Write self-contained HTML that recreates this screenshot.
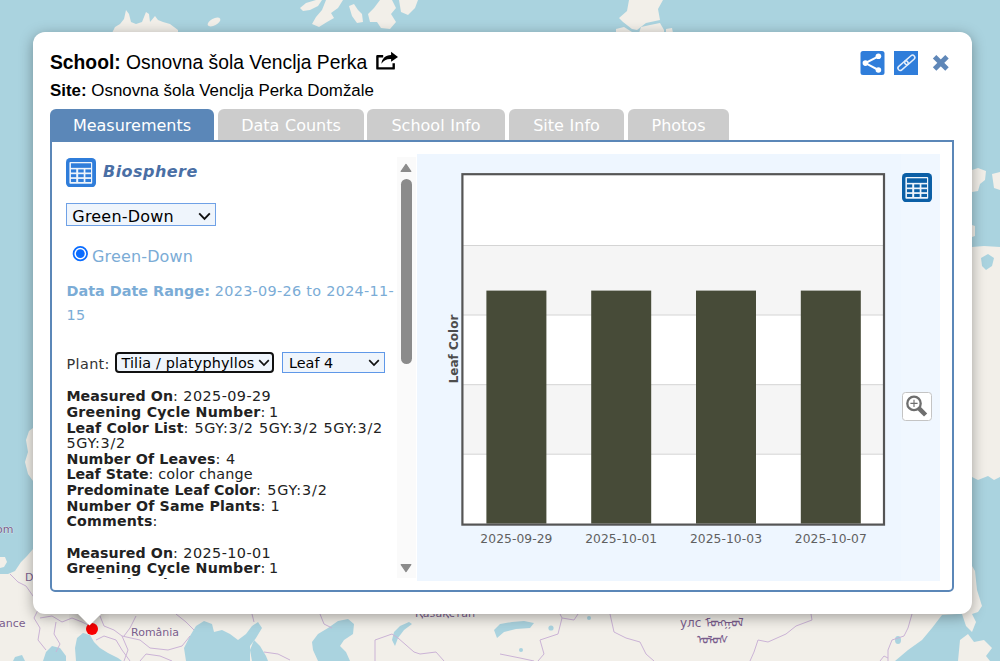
<!DOCTYPE html>
<html lang="en">
<head>
<meta charset="utf-8">
<title>School popup</title>
<style>
  html, body { margin: 0; padding: 0; }
  body {
    width: 1000px; height: 661px; overflow: hidden; position: relative;
    background: #aad3df;
    font-family: "DejaVu Sans", "Liberation Sans", sans-serif;
  }
  #map { position: absolute; left: 0; top: 0; width: 1000px; height: 661px; }
  .abs { position: absolute; }

  /* popup shell */
  #popup {
    position: absolute; left: 32.5px; top: 32.2px; width: 939.6px; height: 581.8px;
    background: #fff; border-radius: 12px;
    box-shadow: 0 3px 14px rgba(0,0,0,0.34);
  }
  #tipwrap { position: absolute; left: 69.3px; top: 614px; width: 40px; height: 20px; overflow: hidden; }
  #tip { position: absolute; left: 11.5px; top: -9px; width: 17px; height: 17px; background: #fff;
         transform: rotate(45deg); box-shadow: 0 3px 14px rgba(0,0,0,0.4); }
  #marker { position: absolute; left: 85.7px; top: 622.6px; width: 12px; height: 12px; border-radius: 50%; background: #f00; }

  /* header */
  .hdr { font-family: "Liberation Sans", sans-serif; color: #000; white-space: nowrap; }
  #school { left: 50px; top: 50.5px; font-size: 19.3px; line-height: 24px; }
  #site { left: 50px; top: 81.4px; font-size: 16.9px; line-height: 20px; }

  /* tabs */
  .tab { position: absolute; top: 109px; height: 32px; border-radius: 6px 6px 0 0; background: #ccc; color: #fff;
         font-size: 16px; line-height: 34px; text-align: center; white-space: nowrap; word-spacing: 0.6px; }
  .tab.on { background: #5b87b8; }
  #panel { position: absolute; left: 50px; top: 140px; width: 900px; height: 448px; border: 2px solid #5b87b8;
           border-radius: 0 0 5px 5px; background: #fff; }

  /* left column */
  .txt { font-size: 14.4px; line-height: 15.67px; color: #222; white-space: nowrap; }
  .ln { height: 15.67px; }
  .ln b { font-size: 14.2px; }
  .sel { position: absolute; box-sizing: border-box; background: #eff5fc; border: 1px solid #6fa1e6; color: #000; white-space: nowrap; }
  .blue { color: #7bacd6; }
</style>
</head>
<body>
<svg id="map" width="1000" height="661" viewBox="0 0 1000 661" style="font-family:'DejaVu Sans','Liberation Sans',sans-serif;">
  <rect x="0" y="0" width="1000" height="661" fill="#aad3df"/>
  <!-- top islands -->
  <g fill="#f2efe9">
    <path d="M112 33 L115 27 L120 24 L124 19 L126 10 L129 14 L131 22 L136 24 L142 22 L146 12 L149 14 L150 22 L155 16 L158 20 L163 22 L170 24 L178 30 L178 33 Z"/>
    <ellipse cx="214" cy="22" rx="7" ry="3.4" transform="rotate(-28 214 22)"/>
    <path d="M300 8 L306 3 L316 0 L322 0 L318 6 L310 10 L303 11 Z"/>
    <path d="M326 0 L343 0 L338 8 L331 13 L334 18 L327 22 L319 27 L312 24 L316 17 L322 10 Z"/>
    <path d="M349 6 L354 4 L358 10 L362 14 L363 22 L357 23 L352 16 Z"/>
    <path d="M368 14 L374 8 L380 0 L392 0 L396 8 L391 14 L396 22 L390 29 L381 28 L377 22 L370 22 Z"/>
    <path d="M399 0 L418 0 L415 8 L408 15 L401 12 Z"/>
    <path d="M629 0 L627 11 L619 18 L623 22 L632 29 L637 30 L646 23 L660 20 L658 9 L663 0 Z"/>
    <path d="M616 29 L624 27 L632 32 L632 33 L616 33 Z"/>
    <path d="M639 33 L641 27 L650 25 L660 23 L664 30 L664 33 Z"/>
    <path d="M666 29 L672 28 L673 33 L666 33 Z"/>
  </g>
  <!-- left: Norway bit -->
  <path d="M33 428 L29 431 L26 440 L28 452 L25 462 L28 474 L33 481 Z" fill="#f2efe9"/>
  <!-- right strip land -->
  <g fill="#f2efe9">
    <path d="M972 170 L978 168 L986 171 L985 180 L980 184 L978 191 L972 192 Z"/>
    <path d="M992 174 L1000 172 L1000 190 L994 188 Z"/>
    <path d="M972 225 L975 226 L975 236 L972 237 Z"/>
    <path d="M972 247 L984 246 L1000 247 L1000 477 L994 480 L988 476 L978 480 L972 477 Z"/>
    <path d="M972 566 L975 571 L977 590 L982 606 L978 612 L972 614 Z"/>
  </g>
  <path d="M981 258 L988 254 L994 258 L992 266 L986 270 L982 266 Z" fill="#aad3df"/>
  <!-- bottom land mass -->
  <path d="M0 574 L8 574 L15 571 L21 562 L27 556 L33 549 L40 600 L972 600 L972 614 L958 614 L942 615 L932 628 L922 640 L908 650 L895 661 L0 661 Z" fill="#f2efe9"/>
  <path d="M0 557 L5 557 L7 562 L4 567 L0 568 Z" fill="#f2efe9"/>
  <!-- Sakhalin / Hokkaido -->
  <path d="M962 614 L972 614 L976 622 L972 632 L966 626 Z" fill="#f2efe9"/>
  <path d="M960 640 L968 634 L974 642 L984 640 L992 648 L986 656 L990 661 L958 661 Z" fill="#f2efe9"/>
  <!-- seas on bottom land -->
  <g fill="#aad3df">
    <path d="M13 661 L15 657 L22 655 L25 661 Z"/>
    <path d="M43 661 L46 652 L52 646 L60 648 L66 656 L66 661 Z"/>
    <path d="M76 661 L75 648 L77 638 L83 633 L90 635 L94 642 L100 648 L108 653 L118 658 L122 661 Z"/>
    <path d="M186 661 L184 648 L190 636 L196 626 L204 621 L212 624 L214 632 L222 630 L230 634 L238 640 L246 634 L252 626 L258 622 L262 628 L256 638 L250 646 L250 661 Z"/>
    <path d="M252 661 L250 650 L254 640 L260 646 L266 656 L268 661 Z"/>
    <path d="M318 661 L313 650 L312 642 L318 634 L328 628 L338 621 L348 619 L354 624 L353 634 L344 640 L340 646 L346 652 L350 661 Z"/>
    <path d="M392 640 L394 632 L400 626 L409 622 L412 624 L404 630 L398 638 L395 646 Z"/>
    <path d="M494 630 L500 624 L512 622 L524 621 L534 623 L530 628 L516 629 L504 632 L497 638 Z"/>
    <circle cx="551" cy="628" r="2.6"/><circle cx="589" cy="618" r="2"/><circle cx="521" cy="650" r="2"/><ellipse cx="898" cy="640" rx="3" ry="4"/>
  </g>
  <!-- country borders -->
  <g fill="none" stroke="#cbb3d6" stroke-width="1" stroke-linejoin="round">
    <path d="M10 574 L18 582 L26 586 L33 596 L40 606 L34 618 L40 628 L38 640 L46 650"/>
    <path d="M40 618 L52 616 L62 622 L72 618 L82 622 L90 626"/>
    <path d="M56 622 L54 634 L60 644 L56 652"/>
    <path d="M100 616 L104 626 L114 630 L122 636 L128 650 L124 661"/>
    <path d="M96 640 L104 636 L116 640 L122 650 L130 661"/>
    <path d="M136 616 L130 628 L124 636"/>
    <path d="M122 636 L140 640 L150 648 L168 650 L182 646 L190 636"/>
    <path d="M176 614 L186 622 L194 630"/>
    <path d="M140 661 L146 654 L160 656 L172 661"/>
    <path d="M252 614 L254 622"/>
    <path d="M264 652 L278 654 L290 660"/>
    <path d="M320 614 L324 624 L332 628"/>
    <path d="M375 661 L375 640 L392 634 L398 638 L414 652 L420 654 L436 652 L444 661"/>
    <path d="M560 614 L562 618 L574 620 L578 614"/>
    <path d="M562 618 L558 634 L540 640 L544 654 L538 661"/>
    <path d="M500 654 L520 658 L534 661"/>
    <path d="M610 614 L614 632 L626 638 L640 642 L646 654 L654 661"/>
    <path d="M811 614 L812 620 L796 626 L786 634 L768 642 L758 640 L754 652 L750 661"/>
    <path d="M912 614 L908 628 L904 636 L892 640 L888 650 L888 661"/>
    <path d="M880 661 L884 656 L888 658"/>
  </g>
  <!-- labels -->
  <g fill="#7a5e8c" font-size="11" stroke="#f7f4f0" stroke-width="0.5" paint-order="stroke">
    <text x="-4" y="533">om</text>
    <text x="25" y="581">D</text>
    <text x="-1" y="627">ance</text>
    <text x="131" y="636">România</text>
    <text x="415" y="616.6">Қазақстан</text>
    <text x="680" y="626.5" font-size="12">улс ᠮᠣᠩᠭᠣᠯ</text>
    <text x="697" y="643.5" font-size="12">ᠤᠯᠤᠰ</text>
  </g>
</svg>
<div id="popup"></div>
<div id="marker"></div>
<div id="tipwrap"><div id="tip"></div></div>

<!-- header -->
<div id="school" class="abs hdr"><b>School:</b> Osnovna šola Venclja Perka</div>
<div id="site" class="abs hdr"><b>Site:</b> Osnovna šola Venclja Perka Domžale</div>
<!-- header icons -->
<svg class="abs" style="left:374px;top:49px;" width="26" height="23" viewBox="0 0 26 23"><path d="M9.2 7.2 H3.4 V19.4 H19.7 V14.2" fill="none" stroke="#000" stroke-width="2.4" stroke-linejoin="round"/><path d="M17.1 2.8 L24 8 L17.1 12.7 V9.9 C12.6 9.7 9.6 11.2 7.4 14.8 C7.9 9.6 11.2 6.2 17.1 5.9 Z" fill="#000"/></svg>
<svg class="abs" style="left:860px;top:51px;" width="25" height="24" viewBox="0 0 25 24"><rect x="0.5" y="0" width="24" height="24" rx="2.5" fill="#2f7dda"/><path d="M18.4 5.3 L5.4 12.1 L18.4 19" fill="none" stroke="#fff" stroke-width="2"/><circle cx="5.4" cy="12.1" r="2.8" fill="#fff"/><circle cx="18.4" cy="5.3" r="2.8" fill="#fff"/><circle cx="18.4" cy="19" r="2.8" fill="#fff"/></svg>
<div class="abs" style="left:894px;top:51px;width:24px;height:24px;background:#2f7dda;">
  <svg width="24" height="24" viewBox="0 0 24 24" style="position:absolute;left:0;top:0;"><g transform="rotate(-41 12.4 11.8)" fill="none" stroke="#e4eefb" stroke-width="1.5"><rect x="2" y="9.5" width="12" height="4.6" rx="2.3"/><rect x="10.8" y="9.5" width="12" height="4.6" rx="2.3"/></g></svg>
</div>
<svg class="abs" style="left:932px;top:54px;" width="18" height="18" viewBox="0 0 18 18"><path d="M2.6 2.7 L15 15.1 M15 2.7 L2.6 15.1" stroke="#5f87b8" stroke-width="4.9" stroke-linecap="butt" fill="none"/></svg>


<!-- tabs -->
<div class="tab on" style="left:50px;width:164px;">Measurements</div>
<div class="tab" style="left:218px;width:146px;">Data Counts</div>
<div class="tab" style="left:367px;width:138px;">School Info</div>
<div class="tab" style="left:509px;width:115px;">Site Info</div>
<div class="tab" style="left:628px;width:101px;">Photos</div>
<div id="panel"></div>

<!-- left column -->
<div id="leftcol" class="abs" style="left:52px;top:157px;width:345px;height:421.8px;overflow:hidden;">
  <div class="abs" style="left:14.3px;top:1px;width:30px;height:30px;">
    <svg width="30" height="29.2" viewBox="0 0 30 29.2"><rect x="0" y="0" width="30" height="29.2" rx="4.2" fill="#2f7dda"/><rect x="3.4" y="3.9" width="22.8" height="21.8" rx="1" fill="#eef4fb"/><rect x="4.95" y="5.3" width="20.05" height="4.55" fill="#2f7dda"/><rect x="4.95" y="11.4" width="5.25" height="3.1" fill="#2f7dda"/><rect x="12.2" y="11.4" width="5.5" height="3.1" fill="#2f7dda"/><rect x="19.4" y="11.4" width="5.6" height="3.1" fill="#2f7dda"/><rect x="4.95" y="16.2" width="5.25" height="3.0" fill="#2f7dda"/><rect x="12.2" y="16.2" width="5.5" height="3.0" fill="#2f7dda"/><rect x="19.4" y="16.2" width="5.6" height="3.0" fill="#2f7dda"/><rect x="4.95" y="20.95" width="5.25" height="3.05" fill="#2f7dda"/><rect x="12.2" y="20.95" width="5.5" height="3.05" fill="#2f7dda"/><rect x="19.4" y="20.95" width="5.6" height="3.05" fill="#2f7dda"/></svg>
  </div>
  <div class="abs" style="left:51px;top:4px;font-size:16px;line-height:22px;font-weight:bold;font-style:italic;color:#4a6fa5;white-space:nowrap;letter-spacing:0.45px;">Biosphere</div>

  <div class="sel" style="left:14.3px;top:46.4px;width:150px;height:23px;font-size:16px;line-height:25px;padding-left:5px;letter-spacing:0.2px;">Green-Down
    <svg class="abs" style="right:4.5px;top:7.5px;" width="13" height="9" viewBox="0 0 13 9"><path d="M1.2 1.4 L6.5 6.8 L11.8 1.4" fill="none" stroke="#111" stroke-width="1.9"/></svg>
  </div>

  <svg class="abs" style="left:20px;top:88px;" width="17" height="17" viewBox="0 0 17 17"><circle cx="8.3" cy="8.6" r="6.75" fill="#fff" stroke="#0a6cff" stroke-width="1.7"/><circle cx="8.3" cy="8.6" r="4.4" fill="#0a6cff"/></svg>
  <div class="abs blue" style="left:40px;top:89.2px;font-size:16px;line-height:22px;white-space:nowrap;letter-spacing:0.15px;">Green-Down</div>

  <div class="abs blue" style="left:14.5px;top:121.5px;width:330px;font-size:14.4px;line-height:24.5px;letter-spacing:0.3px;white-space:nowrap;"><b style="letter-spacing:0px;">Data Date Range:</b> 2023-09-26 to 2024-11-<br>15</div>

  <div class="abs" style="left:14.6px;top:198px;font-size:14.4px;line-height:18px;color:#333;white-space:nowrap;letter-spacing:0.35px;">Plant:</div>
  <div class="sel" style="left:62.5px;top:195px;width:159px;height:21px;font-size:14.4px;line-height:18px;padding-left:5px;border:2px solid #111;border-radius:4px;letter-spacing:0.13px;">Tilia / platyphyllos
    <svg class="abs" style="right:2px;top:4.5px;" width="12" height="8" viewBox="0 0 12 8"><path d="M1.2 1.2 L6 6 L10.8 1.2" fill="none" stroke="#111" stroke-width="1.7"/></svg>
  </div>
  <div class="sel" style="left:230px;top:195px;width:103px;height:21px;font-size:14.4px;line-height:20px;padding-left:6px;border-color:#5f98e8;">Leaf 4
    <svg class="abs" style="right:4px;top:6px;" width="12" height="8" viewBox="0 0 12 8"><path d="M1.2 1.2 L6 6 L10.8 1.2" fill="none" stroke="#111" stroke-width="1.7"/></svg>
  </div>

  <div class="abs txt" style="left:14.4px;top:232.2px;">
    <div class="ln" id="ln0"><b id="b0" style="letter-spacing:0.088px">Measured On</b><span id="r0" style="letter-spacing:0.42px">: 2025-09-29</span></div>
    <div class="ln" id="ln1"><b id="b1" style="letter-spacing:0.244px">Greening Cycle Number</b><span id="r1" style="letter-spacing:-0.464px">: 1</span></div>
    <div class="ln" id="ln2"><b id="b2" style="letter-spacing:0.135px">Leaf Color List</b><span id="r2" style="letter-spacing:0.688px">: 5GY:3/2 5GY:3/2 5GY:3/2</span></div>
    <div class="ln" id="ln3"><span id="r3" style="letter-spacing:0.703px">5GY:3/2</span></div>
    <div class="ln" id="ln4"><b id="b4" style="letter-spacing:0.125px">Number Of Leaves</b><span id="r4" style="letter-spacing:0.536px">: 4</span></div>
    <div class="ln" id="ln5"><b id="b5" style="letter-spacing:-0.012px">Leaf State</b><span id="r5" style="letter-spacing:0.127px">: color change</span></div>
    <div class="ln" id="ln6"><b id="b6" style="letter-spacing:0.046px">Predominate Leaf Color</b><span id="r6" style="letter-spacing:0.865px">: 5GY:3/2</span></div>
    <div class="ln" id="ln7"><b id="b7" style="letter-spacing:0.155px">Number Of Same Plants</b><span id="r7" style="letter-spacing:0.203px">: 1</span></div>
    <div class="ln" id="ln8"><b id="b8" style="letter-spacing:0.19px">Comments</b><span id="r8" style="letter-spacing:0.344px">:</span></div>
    <div class="ln" id="ln9"><span id="r9">&nbsp;</span></div>
    <div class="ln" id="ln10"><b id="b10" style="letter-spacing:0.088px">Measured On</b><span id="r10" style="letter-spacing:0.42px">: 2025-10-01</span></div>
    <div class="ln" id="ln11"><b id="b11" style="letter-spacing:0.244px">Greening Cycle Number</b><span id="r11" style="letter-spacing:-0.464px">: 1</span></div>
    <div class="ln" id="ln12"><b id="b12" style="letter-spacing:0.135px">Leaf Color List</b><span id="r12" style="letter-spacing:0.688px">: 5GY:3/2 5GY:3/2 5GY:3/2</span></div>
    <div class="ln" id="ln13"><span id="r13" style="letter-spacing:0.703px">5GY:3/2</span></div>
  </div>
</div>

<!-- scrollbar -->
<div class="abs" style="left:397px;top:157px;width:19px;height:421px;background:#fafafa;"></div>
<svg class="abs" style="left:400px;top:163px;" width="12" height="10" viewBox="0 0 12 10"><path d="M1.2 8.4 L6 1.4 L10.8 8.4 Z" fill="#8b8b8b" stroke="#8b8b8b" stroke-width="1.2" stroke-linejoin="round"/></svg>
<div class="abs" style="left:401px;top:179px;width:10.5px;height:185px;border-radius:5.5px;background:#8b8b8b;"></div>
<svg class="abs" style="left:400px;top:563px;" width="12" height="10" viewBox="0 0 12 10"><path d="M1.2 1.6 L6 8.6 L10.8 1.6 Z" fill="#8b8b8b" stroke="#8b8b8b" stroke-width="1.2" stroke-linejoin="round"/></svg>

<!-- chart -->
<div class="abs" style="left:417px;top:154px;width:523px;height:427px;background:#eef6ff;">
<svg width="523" height="427" viewBox="0 0 523 427" style="position:absolute;left:0;top:0;font-family:'DejaVu Sans','Liberation Sans',sans-serif;">
  <rect x="484" y="0" width="39" height="427" fill="#f0f7ff"/>
  <rect x="46" y="21" width="420" height="349" fill="#fff"/>
  <rect x="46" y="91" width="420" height="70" fill="#f5f5f5"/>
  <rect x="46" y="230.5" width="420" height="69.5" fill="#f5f5f5"/>
  <g stroke="#d4d4d4" stroke-width="1"><line x1="46" y1="91.5" x2="466" y2="91.5"/><line x1="46" y1="161" x2="466" y2="161"/><line x1="46" y1="230.7" x2="466" y2="230.7"/><line x1="46" y1="300.2" x2="466" y2="300.2"/></g>
  <rect x="69.39999999999998" y="136.60000000000002" width="60" height="233.0" fill="#474b38"/><rect x="174.20000000000005" y="136.60000000000002" width="60" height="233.0" fill="#474b38"/><rect x="279" y="136.60000000000002" width="60" height="233.0" fill="#474b38"/><rect x="383.79999999999995" y="136.60000000000002" width="60" height="233.0" fill="#474b38"/>
  <rect x="45.4" y="20.2" width="421.6" height="350.4" fill="none" stroke="#555" stroke-width="2.2"/>
  <text x="99.39999999999998" y="388.79999999999995" text-anchor="middle" font-size="12.3" letter-spacing="0.06" fill="#606060">2025-09-29</text><text x="204.20000000000005" y="388.79999999999995" text-anchor="middle" font-size="12.3" letter-spacing="0.06" fill="#606060">2025-10-01</text><text x="309" y="388.79999999999995" text-anchor="middle" font-size="12.3" letter-spacing="0.06" fill="#606060">2025-10-03</text><text x="413.79999999999995" y="388.79999999999995" text-anchor="middle" font-size="12.3" letter-spacing="0.06" fill="#606060">2025-10-07</text>
  <text transform="translate(41.2,195) rotate(-90)" text-anchor="middle" font-size="12" font-weight="bold" fill="#4d4d4d">Leaf Color</text>
</svg>
<div class="abs" style="left:485px;top:19.2px;width:30px;height:30px;"><svg width="30" height="29.2" viewBox="0 0 30 29.2"><rect x="0" y="0" width="30" height="29.2" rx="4.2" fill="#0b5fa6"/><rect x="3.4" y="3.9" width="22.8" height="21.8" rx="1" fill="#eef4fb"/><rect x="4.95" y="5.3" width="20.05" height="4.55" fill="#0b5fa6"/><rect x="4.95" y="11.4" width="5.25" height="3.1" fill="#0b5fa6"/><rect x="12.2" y="11.4" width="5.5" height="3.1" fill="#0b5fa6"/><rect x="19.4" y="11.4" width="5.6" height="3.1" fill="#0b5fa6"/><rect x="4.95" y="16.2" width="5.25" height="3.0" fill="#0b5fa6"/><rect x="12.2" y="16.2" width="5.5" height="3.0" fill="#0b5fa6"/><rect x="19.4" y="16.2" width="5.6" height="3.0" fill="#0b5fa6"/><rect x="4.95" y="20.95" width="5.25" height="3.05" fill="#0b5fa6"/><rect x="12.2" y="20.95" width="5.5" height="3.05" fill="#0b5fa6"/><rect x="19.4" y="20.95" width="5.6" height="3.05" fill="#0b5fa6"/></svg></div>
<div class="abs" style="left:485.2px;top:238.2px;width:29.4px;height:28.6px;box-sizing:border-box;border:1px solid #c4c4c4;border-radius:3.5px;background:#fff;">
  <svg width="28" height="27" viewBox="0 0 28 27" style="position:absolute;left:0;top:0;"><circle cx="11" cy="10.4" r="6.7" fill="none" stroke="#6e6e6e" stroke-width="2.3"/><path d="M7.4 10.4 H14.6 M11 6.8 V14" stroke="#6e6e6e" stroke-width="1.1" fill="none"/><path d="M16 15.4 L22.6 22" stroke="#6e6e6e" stroke-width="4.5" stroke-linecap="butt"/></svg>
</div>
</div>

</body>
</html>
